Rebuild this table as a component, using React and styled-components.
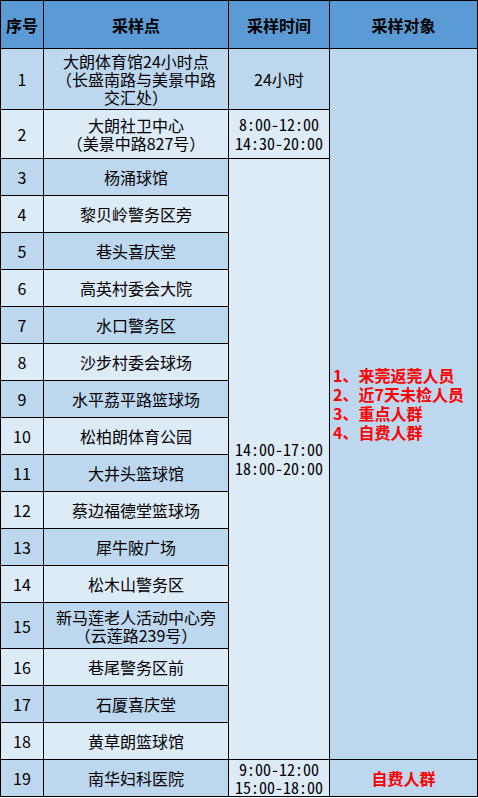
import React from "react";
import styled, { createGlobalStyle } from "styled-components";

const DARK = "#bdd7ee";
const LIGHT = "#ddebf7";

const sites = [
  { no: 1, name: ["大朗体育馆24小时点", "（长盛南路与美景中路", "交汇处）"] },
  { no: 2, name: ["大朗社卫中心", "（美景中路827号）"] },
  { no: 3, name: ["杨涌球馆"] },
  { no: 4, name: ["黎贝岭警务区旁"] },
  { no: 5, name: ["巷头喜庆堂"] },
  { no: 6, name: ["高英村委会大院"] },
  { no: 7, name: ["水口警务区"] },
  { no: 8, name: ["沙步村委会球场"] },
  { no: 9, name: ["水平荔平路篮球场"] },
  { no: 10, name: ["松柏朗体育公园"] },
  { no: 11, name: ["大井头篮球馆"] },
  { no: 12, name: ["蔡边福德堂篮球场"] },
  { no: 13, name: ["犀牛陂广场"] },
  { no: 14, name: ["松木山警务区"] },
  { no: 15, name: ["新马莲老人活动中心旁", "（云莲路239号）"] },
  { no: 16, name: ["巷尾警务区前"] },
  { no: 17, name: ["石厦喜庆堂"] },
  { no: 18, name: ["黄草朗篮球馆"] },
  { no: 19, name: ["南华妇科医院"] },
];

const targets = ["1、来莞返莞人员", "2、近7天未检人员", "3、重点人群", "4、自费人群"];

export default function App() {
  const shade = (n) => (n % 2 === 1 ? DARK : LIGHT);

  return (
    <>
      <GlobalStyle />
      <Sheet>
        <Head>序号</Head>
        <Head>采样点</Head>
        <Head>采样时间</Head>
        <Head>采样对象</Head>

        {sites.map((s) => (
          <React.Fragment key={s.no}>
            <Cell $bg={shade(s.no)}>{s.no}</Cell>
            <Cell $bg={shade(s.no)}>
              {s.name.map((line) => (
                <Line key={line}>{line}</Line>
              ))}
            </Cell>
            {s.no === 1 && <Cell $bg={DARK}>24小时</Cell>}
            {s.no === 1 && (
              <Target $span={18}>
                {targets.map((t) => (
                  <Line key={t}>{t}</Line>
                ))}
              </Target>
            )}
            {s.no === 2 && (
              <Time $bg={LIGHT}>
                <Line>8:00-12:00</Line>
                <Line>14:30-20:00</Line>
              </Time>
            )}
            {s.no === 3 && (
              <Time $bg={LIGHT} $span={16} $top={281}>
                <Line>14:00-17:00</Line>
                <Line>18:00-20:00</Line>
              </Time>
            )}
            {s.no === 19 && (
              <>
                <Time $bg={LIGHT} $lh={18}>
                  <Line>9:00-12:00</Line>
                  <Line>15:00-18:00</Line>
                </Time>
                <Target $center>自费人群</Target>
              </>
            )}
          </React.Fragment>
        ))}
      </Sheet>
    </>
  );
}

const GlobalStyle = createGlobalStyle`
  html, body {
    margin: 0;
    padding: 0;
    background: #fff;
  }
  * {
    box-sizing: border-box;
  }
`;

const Sheet = styled.div`
  width: 478px;
  display: grid;
  grid-template-columns: 42px 184px 100px 147px;
  grid-template-rows: 47px 60px 48px repeat(12, 36px) 45px repeat(4, 36px);
  gap: 1px;
  padding: 1px;
  background: #000;
  font-family: "Noto Sans CJK SC", sans-serif;
  font-size: 16px;
  color: #000;
`;

const Cell = styled.div`
  background: ${(p) => p.$bg};
  display: flex;
  flex-direction: column;
  align-items: center;
  justify-content: center;
  text-align: center;
  line-height: 18px;
  white-space: nowrap;
  overflow: hidden;
`;

const Head = styled(Cell)`
  background: #5b9bd5;
  font-weight: 700;
  font-size: 16px;
`;

const Line = styled.div``;

const Time = styled(Cell)`
  grid-row: span ${(p) => p.$span || 1};
  font-family: "Noto Sans Mono CJK SC", "Liberation Mono", monospace;
  line-height: ${(p) => p.$lh || 19}px;
  justify-content: ${(p) => (p.$top ? "flex-start" : "center")};
  padding-top: ${(p) => p.$top || 0}px;
`;

const Target = styled.div`
  grid-row: span ${(p) => p.$span || 1};
  background: ${DARK};
  color: #ff0000;
  font-weight: 700;
  line-height: 19px;
  display: flex;
  flex-direction: column;
  justify-content: center;
  align-items: ${(p) => (p.$center ? "center" : "flex-start")};
  padding-left: ${(p) => (p.$center ? 0 : 3)}px;
  white-space: nowrap;
`;
